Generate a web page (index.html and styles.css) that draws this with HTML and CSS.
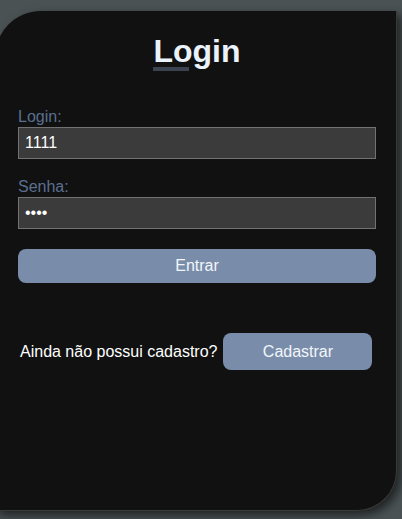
FILE: index.html
```html
<!DOCTYPE html>
<html lang="pt-BR">
<head>
<meta charset="utf-8">
<title>Login</title>
<link rel="stylesheet" href="styles.css">
</head>
<body>
<main class="card">
  <h1 class="title">Login</h1>
  <form class="form">
    <label class="label" for="login">Login:</label>
    <input class="input" id="login" type="text" value="1111">
    <label class="label" for="senha">Senha:</label>
    <input class="input" id="senha" type="password" value="1111">
    <button class="btn btn-enter" type="button">Entrar</button>
  </form>
  <div class="signup">
    <span class="signup-text">Ainda não possui cadastro?</span>
    <button class="btn btn-signup" type="button">Cadastrar</button>
  </div>
</main>
</body>
</html>
```
FILE: styles.css
```css
html, body {
  margin: 0;
  padding: 0;
}
body {
  background: #4a5254;
  font-family: "Liberation Sans", Arial, sans-serif;
  height: 519px;
  overflow: hidden;
}
.card {
  box-sizing: border-box;
  margin-top: 11px;
  margin-left: -5px;
  width: 402px;
  height: 500px;
  background: #111111;
  border-right: 1px solid #3a3a3a;
  border-bottom: 1px solid #3a3a3a;
  border-radius: 46px 0 40px 0;
  box-shadow: 4px 4px 10px rgba(0, 0, 0, 0.6);
  padding: 24px 20px 0 23px;
}
.title {
  margin: 0 auto;
  width: max-content;
  font-size: 32px;
  line-height: 32px;
  font-weight: bold;
  color: #eaf2fb;
}
.title::after {
  content: "";
  display: block;
  width: 36px;
  height: 4px;
  background: #3b4350;
}
.form {
  display: flex;
  flex-direction: column;
  margin-top: 37px;
}
.label {
  display: block;
  font-size: 16px;
  line-height: 18px;
  color: #5b6f8f;
  margin-bottom: 1px;
}
.input {
  box-sizing: border-box;
  width: 358px;
  height: 32px;
  margin: 0 0 19px 0;
  padding: 0 6px;
  background: #3b3b3b;
  border: 1px solid #727272;
  border-radius: 0;
  color: #ffffff;
  font-family: "Liberation Sans", Arial, sans-serif;
  font-size: 16px;
  outline: none;
}
.btn {
  border: none;
  background: #798daa;
  color: #f2f5fa;
  font-family: "Liberation Sans", Arial, sans-serif;
  font-size: 16px;
  border-radius: 8px;
  padding: 0;
  cursor: pointer;
}
.btn-enter {
  width: 358px;
  height: 34px;
  margin-top: 1px;
}
.signup {
  display: flex;
  align-items: center;
  gap: 6px;
  margin-top: 50px;
  padding-left: 2px;
}
.signup-text {
  color: #ffffff;
  font-size: 16px;
}
.btn-signup {
  width: 149px;
  height: 37px;
}
```
